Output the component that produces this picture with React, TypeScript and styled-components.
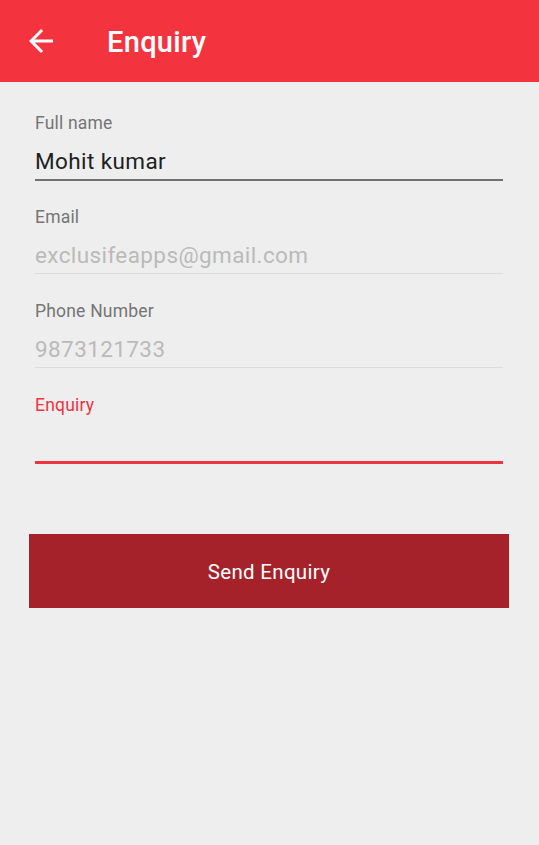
import React from "react";
import styled, { createGlobalStyle } from "styled-components";

const GlobalStyle = createGlobalStyle`
  html, body {
    margin: 0;
    padding: 0;
    background: #eeeeee;
    font-family: Roboto, "Noto Sans", Arial, sans-serif;
  }
  * { box-sizing: border-box; }
`;

const Screen = styled.div`
  width: 539px;
  min-height: 845px;
  background: #eeeeee;
  display: flex;
  flex-direction: column;
`;

const AppBar = styled.header`
  height: 82px;
  background: #f3343f;
  display: flex;
  align-items: center;
  padding-left: 23px;
`;

const BackButton = styled.button`
  width: 36px;
  height: 36px;
  padding: 0;
  border: none;
  background: transparent;
  display: flex;
  align-items: center;
  justify-content: center;
  cursor: pointer;
`;

const Title = styled.h1`
  margin: 2px 0 0 48px;
  font-size: 29px;
  font-weight: 500;
  letter-spacing: 0.3px;
  color: #ffffff;
  line-height: 34px;
`;

const Form = styled.form`
  padding: 31px 36px 0 35px;
  display: flex;
  flex-direction: column;
`;

const Field = styled.label`
  height: 94px;
  display: flex;
  flex-direction: column;
`;

const FieldLabel = styled.span<{ $active?: boolean }>`
  font-size: 17.5px;
  letter-spacing: 0.2px;
  line-height: 20px;
  color: ${(p) => (p.$active ? "#ee3440" : "#757575")};
`;

const InputWrap = styled.div<{ $line: string; $width: number }>`
  margin-top: 15px;
  padding-bottom: 5px;
  border-bottom: ${(p) => p.$width}px solid ${(p) => p.$line};
`;

const Input = styled.input`
  display: block;
  width: 100%;
  height: 26px;
  padding: 0;
  border: none;
  outline: none;
  background: transparent;
  font-family: Roboto, "Noto Sans", Arial, sans-serif;
  font-size: 22.5px;
  letter-spacing: 0.4px;
  line-height: 26px;
  color: #212121;
  &::placeholder {
    color: #bababa;
    opacity: 1;
  }
`;

const SendButton = styled.button`
  margin: 45px -6px 0 -6px;
  height: 74px;
  border: none;
  background: #a5222b;
  color: #ffffff;
  font-family: Roboto, "Noto Sans", Arial, sans-serif;
  font-size: 20.5px;
  letter-spacing: 0.3px;
  font-weight: 400;
  padding-top: 2px;
  cursor: pointer;
`;

const BackArrow = () => (
  <svg width="36" height="36" viewBox="0 0 24 24" fill="#ffffff">
    <path d="M20 11H7.83l5.59-5.59L12 4l-8 8 8 8 1.41-1.41L7.83 13H20v-2z" />
  </svg>
);

export default function App() {
  return (
    <>
      <GlobalStyle />
      <Screen>
        <AppBar>
          <BackButton type="button" aria-label="Back">
            <BackArrow />
          </BackButton>
          <Title>Enquiry</Title>
        </AppBar>
        <Form onSubmit={(e) => e.preventDefault()}>
          <Field>
            <FieldLabel>Full name</FieldLabel>
            <InputWrap $line="#717171" $width={2}>
              <Input defaultValue="Mohit kumar" />
            </InputWrap>
          </Field>
          <Field>
            <FieldLabel>Email</FieldLabel>
            <InputWrap $line="#dcdcdc" $width={1}>
              <Input placeholder="exclusifeapps@gmail.com" />
            </InputWrap>
          </Field>
          <Field>
            <FieldLabel>Phone Number</FieldLabel>
            <InputWrap $line="#dcdcdc" $width={1}>
              <Input placeholder="9873121733" />
            </InputWrap>
          </Field>
          <Field>
            <FieldLabel $active>Enquiry</FieldLabel>
            <InputWrap $line="#ee3440" $width={3}>
              <Input />
            </InputWrap>
          </Field>
          <SendButton type="submit">Send Enquiry</SendButton>
        </Form>
      </Screen>
    </>
  );
}
